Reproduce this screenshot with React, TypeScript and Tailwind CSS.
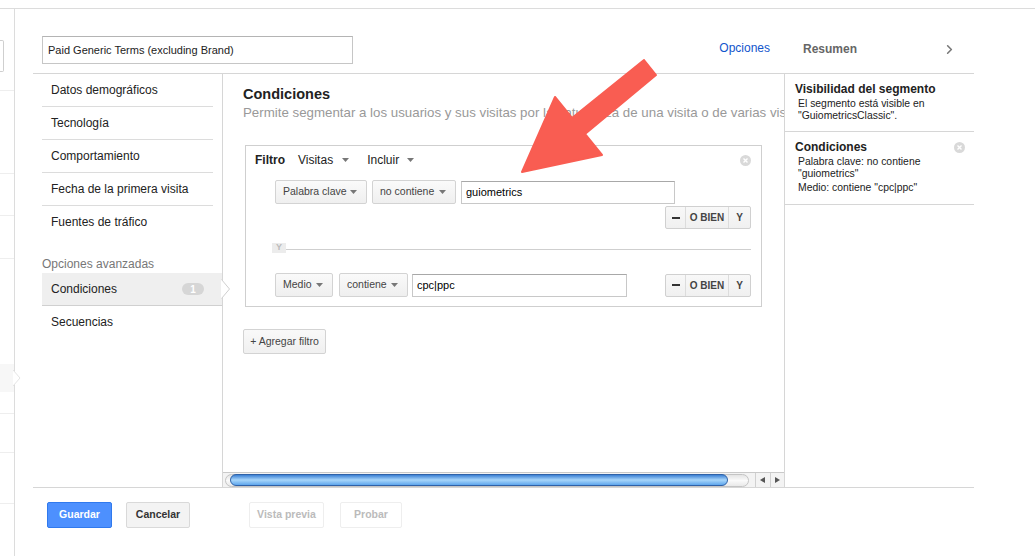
import { ChevronRight } from 'lucide-react'
import { clsx } from 'clsx'

const font = "font-['Liberation_Sans',Arial,sans-serif]"

function Caret({ className }: { className?: string }) {
  return (
    <svg width="7" height="4" viewBox="0 0 7 4" className={className}>
      <path d="M0 0h7L3.5 4z" fill="#777" />
    </svg>
  )
}

function CloseDot({ className }: { className?: string }) {
  return (
    <svg width="11" height="11" viewBox="0 0 11 11" className={className}>
      <circle cx="5.5" cy="5.5" r="5.5" fill="#d9d9d9" />
      <path d="M3.5 3.5l4 4M7.5 3.5l-4 4" stroke="#fff" strokeWidth="1.4" />
    </svg>
  )
}

function Select({ label, width, className }: { label: string; width: string; className?: string }) {
  return (
    <div
      className={clsx(
        'flex h-[24px] shrink-0 items-center justify-between rounded-[2px] border border-[#d3d3d3] bg-linear-to-b from-[#fafafa] to-[#efefef] pl-[7px] pr-[9px] text-[10.5px] text-[#444]',
        width,
        className,
      )}
    >
      <span>{label}</span>
      <Caret />
    </div>
  )
}

function TextInput({ value, width, className }: { value: string; width: string; className?: string }) {
  return (
    <div
      className={clsx(
        'flex h-[23px] shrink-0 items-center border border-[#c8c8c8] border-t-[#a8a8a8] bg-white pl-[4px] text-[11px] text-black',
        width,
        className,
      )}
    >
      {value}
    </div>
  )
}

function OrAnd() {
  return (
    <div className="flex h-[23px] w-[86px] rounded-[2px] border border-[#d0d0d0] bg-linear-to-b from-[#f8f8f8] to-[#f0f0f0] text-[10px] font-bold text-[#444]">
      <div className="flex w-[20px] items-center justify-center border-r border-[#dcdcdc]">
        <div className="h-[2px] w-[8px] bg-[#333]" />
      </div>
      <div className="flex w-[43px] items-center justify-center border-r border-[#dcdcdc]">O BIEN</div>
      <div className="flex flex-1 items-center justify-center">Y</div>
    </div>
  )
}

function NavItem({ label, last }: { label: string; last?: boolean }) {
  return (
    <div
      className={clsx(
        'flex h-[33px] w-[171px] items-center pb-[1px] pl-[9px] text-[12px] text-[#222]',
        !last && 'border-b border-[#dcdcdc]',
      )}
    >
      {label}
    </div>
  )
}

function LeftStrip() {
  return (
    <div className="flex w-[15px] shrink-0 flex-col border-r border-[#dcdcdc]">
      <div className="mt-[31px] h-[32px] w-[4px] rounded-r-[2px] border border-l-0 border-[#cfcfcf]" />
      <div className="mt-[18px] border-b border-[#eee]" />
      <div className="mt-[82px] border-b border-[#eee]" />
      <div className="mt-[41px] border-b border-[#eee]" />
      <div className="mt-[42px] border-b border-[#eee]" />
      <div className="relative mt-[105px] h-[28px] bg-[#f7f7f7]">
        <svg width="8" height="16" viewBox="0 0 8 16" className="absolute left-full top-[6px] -ml-px">
          <path d="M0 0l7 8-7 8z" fill="#fff" />
          <path d="M0 0l7 8-7 8" fill="none" stroke="#e4e4e4" />
        </svg>
      </div>
      <div className="mt-[21px] border-b border-[#eee]" />
      <div className="mt-[38px] border-b border-[#eee]" />
      <div className="mt-[50px] border-b border-[#eee]" />
    </div>
  )
}

function Scrollbar() {
  return (
    <div className="flex h-[15px] shrink-0 border-t border-[#c9c9c9] bg-[#f3f3f3]">
      <div className="flex flex-1 items-center pl-[2px] pr-[6px]">
        <div className="flex h-[13px] flex-1 items-center rounded-full border border-[#c4c4c4] bg-linear-to-b from-[#e4e4e4] via-[#fafafa] to-[#e9e9e9] pl-[4px] pr-[20px]">
          <div className="h-[12px] w-[498px] rounded-full border border-[#2f62a8] bg-linear-to-b from-[#3a7fd3] via-[#a8d6fa] to-[#5ea6ec]" />
        </div>
      </div>
      <div className="flex w-[16px] items-center justify-center border-l border-[#d0d0d0]">
        <svg width="5" height="6" viewBox="0 0 5 6">
          <path d="M5 0v6L0 3z" fill="#555" />
        </svg>
      </div>
      <div className="flex w-[16px] items-center justify-center border-l border-[#d0d0d0]">
        <svg width="5" height="6" viewBox="0 0 5 6">
          <path d="M0 0v6l5-3z" fill="#555" />
        </svg>
      </div>
    </div>
  )
}

export default function App() {
  return (
    <div className={clsx('relative h-[556px] w-[1035px] overflow-hidden bg-white text-[#222]', font)}>
      <div className="mt-[8px] flex h-[548px] border-t border-[#dcdcdc]">
        <LeftStrip />
        <div className="flex flex-1 flex-col">
          {/* header */}
          <div className="ml-[18px] flex h-[65px] w-[941px] border-b border-[#d6d6d6]">
            <div className="flex w-[752px] items-start justify-between pl-[9px] pr-[15px]">
              <div className="mt-[27px] flex h-[28px] w-[311px] items-center border border-[#c6c6c6] border-t-[#b4b4b4] pl-[5px] text-[11px] text-[#222]">
                Paid Generic Terms (excluding Brand)
              </div>
              <span className="mt-[32px] text-[12px] leading-[14px] text-[#1155cc]">Opciones</span>
            </div>
            <div className="flex flex-1 items-start justify-between pl-[18px] pr-[17px]">
              <span className="mt-[33px] text-[12px] font-bold leading-[14px] text-[#666]">Resumen</span>
              <ChevronRight className="mt-[33px] h-[15px] w-[15px] text-[#777]" strokeWidth={2.5} />
            </div>
          </div>

          {/* body */}
          <div className="ml-[18px] flex h-[414px] w-[941px] border-b border-[#d6d6d6]">
            {/* nav */}
            <div className="w-[189px] shrink-0 pl-[9px]">
              <NavItem label="Datos demográficos" />
              <NavItem label="Tecnología" />
              <NavItem label="Comportamiento" />
              <NavItem label="Fecha de la primera visita" />
              <NavItem label="Fuentes de tráfico" last />
              <div className="mt-[18px] text-[12px] leading-[14px] text-[#777]">Opciones avanzadas</div>
              <div className="relative mt-[2px] flex h-[33px] items-center justify-between border-b border-[#d0d0d0] bg-[#efefef] pl-[9px] pr-[18px] text-[12px]">
                <span>Condiciones</span>
                <span className="flex h-[12px] w-[22px] items-center justify-center rounded-full bg-[#d6d6d6] text-[10px] font-bold text-white">
                  1
                </span>
                <svg width="10" height="20" viewBox="0 0 10 20" className="absolute left-full top-[6px] -ml-px">
                  <path d="M0 0l9 10-9 10z" fill="#fff" />
                  <path d="M0.5 0.5l8 9.5-8 9.5" fill="none" stroke="#cfcfcf" />
                </svg>
              </div>
              <NavItem label="Secuencias" last />
            </div>

            {/* middle */}
            <div className="flex w-[563px] shrink-0 flex-col border-x border-[#d6d6d6]">
              <div className="flex-1 overflow-hidden pl-[20px] pt-[12px]">
                <h2 className="text-[14.5px] font-bold leading-[17px] text-[#222]">Condiciones</h2>
                <p className="mt-[2px] whitespace-nowrap text-[13.3px] leading-[16px] text-[#999]">
                  Permite segmentar a los usuarios y sus visitas por la naturaleza de una visita o de varias visitas.
                </p>

                <div className="ml-[2px] mt-[24px] w-[517px] border border-[#cfcfcf] pb-[9px]">
                  <div className="flex h-[28px] items-center pl-[9px] pr-[10px] text-[12px]">
                    <span className="font-bold">Filtro</span>
                    <span className="ml-[13px]">Visitas</span>
                    <Caret className="ml-[9px]" />
                    <span className="ml-[18px]">Incluir</span>
                    <Caret className="ml-[8px]" />
                    <CloseDot className="ml-auto" />
                  </div>

                  <div className="mt-[6px] flex items-center pl-[29px]">
                    <Select label="Palabra clave" width="w-[92px]" />
                    <Select label="no contiene" width="w-[84px]" className="ml-[5px]" />
                    <TextInput value="guiometrics" width="w-[214px]" className="ml-[5px]" />
                  </div>
                  <div className="mt-[2px] flex justify-end pr-[10px]">
                    <OrAnd />
                  </div>

                  <div className="mt-[14px] flex items-center pl-[26px] pr-[10px]">
                    <span className="flex h-[10px] w-[14px] items-center justify-center bg-[#ececec] text-[9px] font-bold text-[#bbb]">
                      Y
                    </span>
                    <div className="mt-[3px] h-px flex-1 bg-[#cfcfcf]" />
                  </div>

                  <div className="mt-[20px] flex items-center pl-[29px] pr-[10px]">
                    <Select label="Medio" width="w-[58px]" />
                    <Select label="contiene" width="w-[69px]" className="ml-[6px]" />
                    <TextInput value="cpc|ppc" width="w-[215px]" className="ml-[4px]" />
                    <div className="ml-auto">
                      <OrAnd />
                    </div>
                  </div>
                </div>

                <button
                  type="button"
                  className="mt-[22px] flex h-[25px] w-[83px] items-center justify-center rounded-[2px] border border-[#d3d3d3] bg-linear-to-b from-[#f9f9f9] to-[#f0f0f0] text-[10.5px] text-[#444]"
                >
                  + Agregar filtro
                </button>
              </div>
              <Scrollbar />
            </div>

            {/* right */}
            <div className="flex-1">
              <div className="border-b border-[#d6d6d6] pb-[9px] pl-[10px] pt-[8px]">
                <div className="text-[12px] font-bold leading-[14px]">Visibilidad del segmento</div>
                <div className="mt-[2px] pl-[3px] text-[10.4px] leading-[12px] text-[#222]">
                  <div>El segmento está visible en</div>
                  <div>"GuiometricsClassic".</div>
                </div>
              </div>
              <div className="border-b border-[#d6d6d6] pb-[10px] pl-[10px] pr-[9px] pt-[8px]">
                <div className="flex items-center justify-between">
                  <span className="text-[12px] font-bold leading-[14px]">Condiciones</span>
                  <CloseDot />
                </div>
                <div className="mt-[2px] pl-[3px] text-[10.4px] leading-[12px] text-[#222]">
                  <div>Palabra clave: no contiene</div>
                  <div>"guiometrics"</div>
                  <div className="mt-[2px]">Medio: contiene "cpc|ppc"</div>
                </div>
              </div>
            </div>
          </div>

          {/* footer */}
          <div className="flex items-center pl-[32px] pt-[14px] text-[10.5px] font-bold">
            <button
              type="button"
              className="h-[26px] w-[65px] rounded-[2px] border border-[#3079ed] bg-[#4d90fe] text-white"
            >
              Guardar
            </button>
            <button
              type="button"
              className="ml-[14px] h-[26px] w-[64px] rounded-[2px] border border-[#d9d9d9] bg-[#f3f3f3] text-[#333]"
            >
              Cancelar
            </button>
            <button
              type="button"
              className="ml-[59px] h-[26px] w-[75px] rounded-[2px] border border-[#eeeeee] bg-white text-[#bbb]"
            >
              Vista previa
            </button>
            <button
              type="button"
              className="ml-[16px] h-[26px] w-[62px] rounded-[2px] border border-[#eeeeee] bg-white text-[#bbb]"
            >
              Probar
            </button>
          </div>
        </div>
      </div>

      {/* annotation arrow */}
      <svg
        width="1035"
        height="556"
        viewBox="0 0 1035 556"
        className="pointer-events-none absolute left-0 top-0"
      >
        <polygon
          points="522,172 555,97 572,118 644,60 656,75 585,134 602,155"
          fill="#f95d52"
          stroke="#f95d52"
          strokeWidth="2"
          strokeLinejoin="round"
        />
      </svg>
    </div>
  )
}
